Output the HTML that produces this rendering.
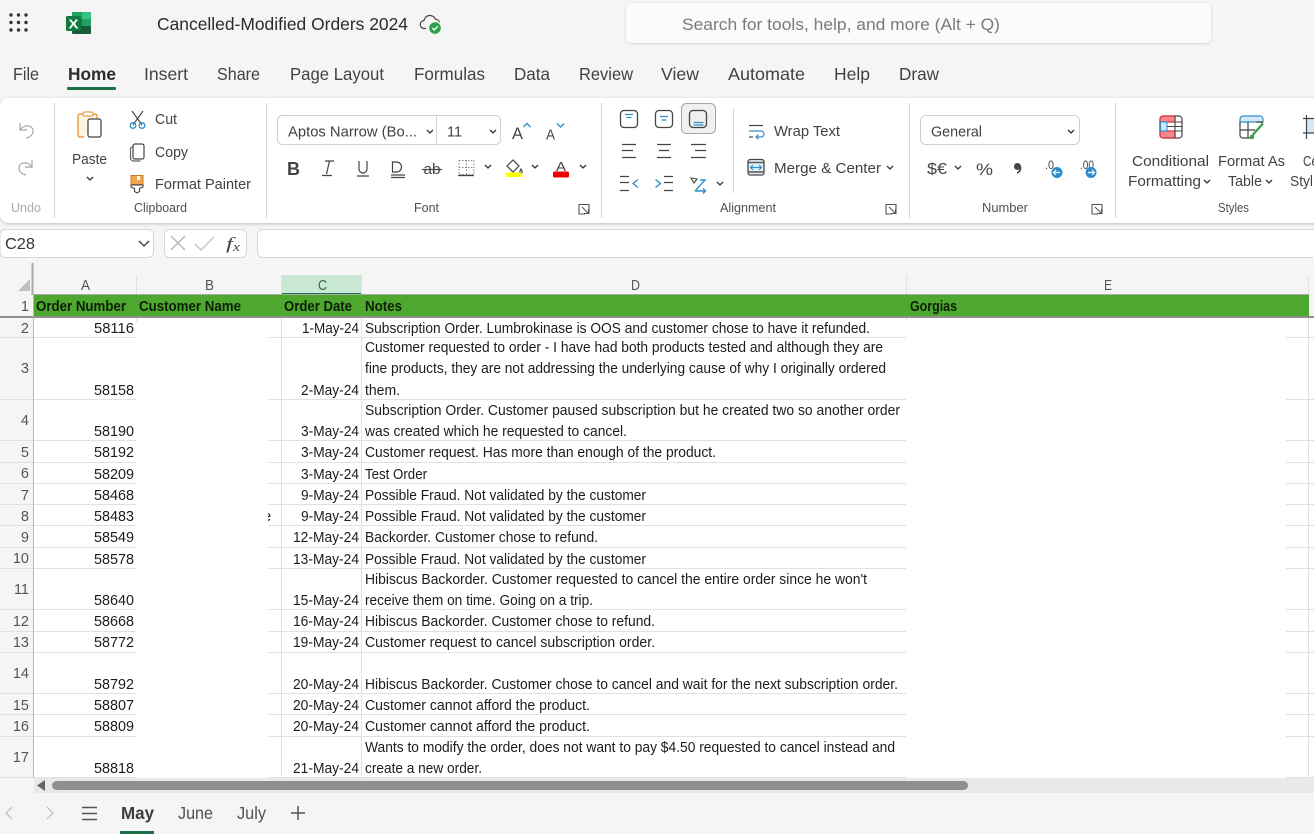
<!DOCTYPE html>
<html lang="en">
<head>
<meta charset="utf-8">
<title>Cancelled-Modified Orders 2024</title>
<style>
html,body{margin:0;padding:0;width:1314px;height:834px;overflow:hidden;background:#f5f5f5}
svg{display:block}
text{font-family:"Liberation Sans",sans-serif}
.c text{font-size:14.5px;fill:#1c1c1c}
.m text{font-size:17.5px;fill:#424242}
.u text{font-size:14.5px;fill:#424242}
.h text{font-size:14.5px;fill:#555}
.rn text{font-size:14.5px;fill:#555;text-anchor:end}
.bl{fill:none;stroke:#2f8fc9;stroke-width:1.4}
.ch{fill:none;stroke:#333;stroke-width:1.3}
.gl{stroke:#e1e1e1;stroke-width:1}
</style>
</head>
<body>
<svg xmlns="http://www.w3.org/2000/svg" width="1314" height="834" viewBox="0 0 1314 834">
<defs>
<filter id="sh" x="-2%" y="-10%" width="104%" height="125%"><feDropShadow dx="0" dy="1" stdDeviation="1.5" flood-color="#000" flood-opacity=".22"/></filter>
<filter id="sh2" x="-2%" y="-20%" width="104%" height="150%"><feDropShadow dx="0" dy="0.5" stdDeviation="1" flood-color="#000" flood-opacity=".18"/></filter>
<clipPath id="clipE"><rect x="268" y="508" width="3" height="16"/></clipPath>
</defs>
<rect width="1314" height="834" fill="#f5f5f5"/>

<!-- App launcher -->
<g fill="#333">
<circle cx="11" cy="15" r="1.7"/><circle cx="18.5" cy="15" r="1.7"/><circle cx="26" cy="15" r="1.7"/>
<circle cx="11" cy="22.5" r="1.7"/><circle cx="18.5" cy="22.5" r="1.7"/><circle cx="26" cy="22.5" r="1.7"/>
<circle cx="11" cy="30" r="1.7"/><circle cx="18.5" cy="30" r="1.7"/><circle cx="26" cy="30" r="1.7"/>
</g>
<!-- Excel logo -->
<rect x="72" y="12" width="19" height="7" fill="#21a366"/>
<rect x="72" y="19" width="19" height="7" fill="#107c41"/>
<rect x="72" y="26" width="19" height="8" rx="1" fill="#185c37"/>
<rect x="82" y="12" width="9" height="7" fill="#33c481"/>
<rect x="82" y="19" width="9" height="7" fill="#21a366"/>
<rect x="66" y="16" width="15" height="15" rx="1.5" fill="#0f7b3f"/>
<text x="68.500" y="28.500" font-size="13" font-weight="bold" fill="#fff" textLength="10" lengthAdjust="spacingAndGlyphs">X</text>

<text x="157" y="30" font-size="17.5" fill="#2b2b2b" textLength="251" lengthAdjust="spacingAndGlyphs">Cancelled-Modified Orders 2024</text>
<!-- cloud -->
<path d="M426 28.5h-1.5a4 4 0 0 1-.5-8 6 6 0 0 1 11.5-1.2 4 4 0 0 1 4 3" fill="none" stroke="#444" stroke-width="1.2"/>
<circle cx="435" cy="28" r="5.8" fill="#2e9e4f"/>
<path d="M432.3 28l2 2 3.4-3.8" fill="none" stroke="#fff" stroke-width="1.3"/>

<!-- Search -->
<rect x="626" y="3" width="585" height="40" rx="5" fill="#fbfbfb" filter="url(#sh2)"/>
<text x="682" y="30" font-size="17" fill="#7a7a7a" textLength="318" lengthAdjust="spacingAndGlyphs">Search for tools, help, and more (Alt + Q)</text>

<!-- Menu tabs -->
<g class="m">
<text x="13" y="80" textLength="26" lengthAdjust="spacingAndGlyphs">File</text>
<text x="68" y="80" textLength="48" lengthAdjust="spacingAndGlyphs" style="font-weight:bold;fill:#2b2b2b">Home</text>
<text x="144" y="80" textLength="44" lengthAdjust="spacingAndGlyphs">Insert</text>
<text x="217" y="80" textLength="43" lengthAdjust="spacingAndGlyphs">Share</text>
<text x="290" y="80" textLength="94" lengthAdjust="spacingAndGlyphs">Page Layout</text>
<text x="414" y="80" textLength="71" lengthAdjust="spacingAndGlyphs">Formulas</text>
<text x="514" y="80" textLength="36" lengthAdjust="spacingAndGlyphs">Data</text>
<text x="579" y="80" textLength="54" lengthAdjust="spacingAndGlyphs">Review</text>
<text x="661" y="80" textLength="38" lengthAdjust="spacingAndGlyphs">View</text>
<text x="728" y="80" textLength="77" lengthAdjust="spacingAndGlyphs">Automate</text>
<text x="834" y="80" textLength="36" lengthAdjust="spacingAndGlyphs">Help</text>
<text x="899" y="80" textLength="40" lengthAdjust="spacingAndGlyphs">Draw</text>
</g>
<rect x="67" y="87" width="49" height="3" rx="1" fill="#1e6f46"/>

<!-- Ribbon -->
<rect x="0" y="98" width="1340" height="125" rx="9" fill="#fff" filter="url(#sh)"/>
<g stroke="#d4d4d4" stroke-width="1">
<path d="M54.5 103v115M266.5 103v115M601.5 103v115M733.5 108v85M909.5 103v115M1115.5 103v115"/>
</g>

<!-- Undo / redo -->
<g fill="none" stroke="#a8a8a8" stroke-width="1.2">
<path d="M20 123v7h7M20.500 129.500C24 124 33 125 33 131c0 3-2 6-7 7"/>
<path d="M32 160v7h-7M31.500 166.500C28 161 19 162 19 168c0 3 2 6 7 7"/>
</g>
<text x="11" y="212" font-size="12.5" fill="#ababab" textLength="30" lengthAdjust="spacingAndGlyphs">Undo</text>

<!-- Paste -->
<path d="M84 137h-4a2 2 0 0 1-2-2v-19a2 2 0 0 1 2-2h15a2 2 0 0 1 2 2v3" fill="#fdf3e3" stroke="#e8a04c" stroke-width="1.5"/>
<rect x="83" y="112" width="10" height="4" rx="1.5" fill="#fff" stroke="#e8a04c" stroke-width="1.3"/>
<rect x="88" y="119" width="13" height="18" rx="2" fill="#fff" stroke="#444" stroke-width="1.3"/>
<text x="72" y="164" font-size="14.5" fill="#424242" textLength="35" lengthAdjust="spacingAndGlyphs">Paste</text>
<path class="ch" d="M87 177l3 3 3-3"/>

<!-- Cut copy painter -->
<g fill="none" stroke="#444" stroke-width="1.1"><path d="M132 111l10 14M143 111l-10 14"/></g>
<g fill="none" stroke="#2f8fc9" stroke-width="1.3"><circle cx="133" cy="125.500" r="2.800"/><circle cx="142" cy="125.500" r="2.800"/></g>
<rect x="133" y="144" width="11" height="15" rx="2" fill="#fff" stroke="#444" stroke-width="1.2"/>
<path d="M133 147h-.5a2 2 0 0 0-2 2v9a3 3 0 0 0 3 3h7" fill="none" stroke="#666" stroke-width="1.2"/>
<path d="M131 175.500h12v9h-12z" fill="#f2a54a" stroke="#c77a28" stroke-width="1"/>
<rect x="137" y="176" width="3" height="4" fill="#fff"/>
<path d="M131 185h12v2l-3.500 1.500v3l-2.500 1.500-2.500-1.500v-3l-3.500-1.500z" fill="#fff" stroke="#444" stroke-width="1.100"/>
<g class="u">
<text x="155" y="124" textLength="22" lengthAdjust="spacingAndGlyphs">Cut</text>
<text x="155" y="157" textLength="33" lengthAdjust="spacingAndGlyphs">Copy</text>
<text x="155" y="189" textLength="96" lengthAdjust="spacingAndGlyphs">Format Painter</text>
</g>

<!-- Font combos -->
<rect x="277.500" y="115.500" width="223" height="29" rx="5" fill="#fff" stroke="#cfcfcf"/>
<path d="M436.500 116v28" stroke="#d4d4d4"/>
<text x="288" y="136.500" font-size="14.500" fill="#424242" textLength="129" lengthAdjust="spacingAndGlyphs">Aptos Narrow (Bo...</text>
<path class="ch" d="M427 130l3 3 3-3"/>
<text x="447" y="136.500" font-size="14.500" fill="#424242" textLength="15" lengthAdjust="spacingAndGlyphs">11</text>
<path class="ch" d="M490 130l3 3 3-3"/>
<text x="512" y="139" font-size="17" fill="#444" textLength="11" lengthAdjust="spacingAndGlyphs">A</text>
<path d="M523.500 127l3.500-3.500 3.500 3.500" class="bl"/>
<text x="546" y="139.500" font-size="14.500" fill="#444" textLength="9" lengthAdjust="spacingAndGlyphs">A</text>
<path d="M557 123.500l3.500 3.500 3.500-3.500" class="bl"/>

<!-- Font buttons -->
<text x="287" y="175" font-size="18" font-weight="bold" fill="#444" textLength="13" lengthAdjust="spacingAndGlyphs">B</text>
<path d="M325 161h9M329.500 161l-3 13M322 175.500h10" fill="none" stroke="#444" stroke-width="1.200"/>
<path d="M359 161v8a4 4 0 0 0 8 0v-8M357 176h12" fill="none" stroke="#444" stroke-width="1.200"/>
<path d="M392.500 162v10h4a5 5 0 0 0 0-10zM391 175h14M391 177.500h14" fill="none" stroke="#444" stroke-width="1.200"/>
<text x="423.500" y="174" font-size="15" fill="#444" textLength="17" lengthAdjust="spacingAndGlyphs">ab</text>
<path d="M422 169.500h20" stroke="#444" stroke-width="1.200"/>
<path d="M459 160.500h15v14h-15zM466.500 160.500v14M459 167.500h15" fill="none" stroke="#888" stroke-width="1" stroke-dasharray="1.500 1.500"/>
<path d="M458 175.500h16" stroke="#444" stroke-width="1.300"/>
<path class="ch" d="M485 165l3 3 3-3"/>
<path d="M507 166l6-6 6 6-6 6zM521 169c1.500 2 1.500 4 0 4s-1.500-2 0-4z" fill="none" stroke="#444" stroke-width="1.200"/>
<rect x="506" y="172.500" width="16" height="4.500" rx="1.500" fill="#ffff00"/>
<path class="ch" d="M532 165l3 3 3-3"/>
<text x="556" y="171" font-size="13" fill="#444" textLength="10" lengthAdjust="spacingAndGlyphs">A</text>
<rect x="553" y="171.500" width="16" height="6" rx="1.500" fill="#ee0000"/>
<path class="ch" d="M580 165l3 3 3-3"/>

<text x="414" y="212" font-size="12.500" fill="#505050" textLength="25" lengthAdjust="spacingAndGlyphs">Font</text>
<text x="134" y="212" font-size="12.500" fill="#505050" textLength="53" lengthAdjust="spacingAndGlyphs">Clipboard</text>

<!-- Expand icons -->
<g fill="none" stroke="#555" stroke-width="1.100">
<path d="M589 214v-9.500h-10v9.500h6M582 207l6.500 6.500M588.500 209v4.500h-4.500"/>
<path d="M896 214v-9.500h-10v9.500h6M889 207l6.500 6.500M895.500 209v4.500h-4.500"/>
<path d="M1102 214v-9.500h-10v9.500h6M1095 207l6.500 6.500M1101.500 209v4.500h-4.500"/>
</g>

<!-- Alignment -->
<rect x="681.500" y="103.500" width="34" height="30" rx="5" fill="#f0f0f0" stroke="#a5a5a5"/>
<g fill="#fff" stroke="#444" stroke-width="1.300">
<rect x="620.500" y="110.500" width="17" height="17" rx="3.500"/>
<rect x="655.500" y="110.500" width="17" height="17" rx="3.500"/>
<rect x="689.500" y="110.500" width="17" height="17" rx="3.500" fill="#f0f0f0"/>
</g>
<g class="bl" style="stroke-width:1.200">
<path d="M625 114.500h8M626.500 117.500h5M660 116.500h8M661.500 120h5M693.500 122.500h10M693.500 125h10"/>
</g>
<g stroke="#444" stroke-width="1.200" fill="none">
<path d="M622 144.500h14M622 150.500h11M622 157.500h14"/>
<path d="M657 144.500h14M659 150.500h10M657 157.500h14"/>
<path d="M691 144.500h15M695 150.500h11M691 157.500h15"/>
<path d="M620 176.500h9M620 182.500h9M620 190.500h9"/>
<path d="M664 176.500h9M664 182.500h9M664 190.500h9"/>
</g>
<path class="bl" d="M638 179.500l-5 4 5 4M655.500 179.500l5 4-5 4"/>
<path d="M691 178l6 1-3 4z" fill="none" stroke="#444" stroke-width="1.100"/>
<path class="bl" d="M695 191l10-11h-5M695 191h10M703 188.500l2.500 2.500-2.500 2.500"/>
<path class="ch" d="M717 182l3 3 3-3"/>

<path d="M749 125.500h14" stroke="#444" stroke-width="1.200"/>
<path d="M749 131h12a3 3 0 0 1 0 6h-5M758.500 134.500l-2.500 2.500 2.500 2.500" fill="none" stroke="#2f8fc9" stroke-width="1.200"/>
<path d="M749 137h4" stroke="#444" stroke-width="1.200"/>
<text x="774" y="136" font-size="14.500" fill="#424242" textLength="66" lengthAdjust="spacingAndGlyphs">Wrap Text</text>
<rect x="748" y="159.500" width="16" height="15.500" rx="2.500" fill="#e6f1f9" stroke="#444" stroke-width="1.300"/>
<path d="M748 162.500h16M748 172h16" stroke="#555" stroke-width="1.400"/>
<path d="M751 167.500h10M753 165l-2.500 2.500 2.500 2.500M759 165l2.500 2.500-2.500 2.500" fill="none" stroke="#2f8fc9" stroke-width="1.200"/>
<text x="774" y="173" font-size="14.500" fill="#424242" textLength="107" lengthAdjust="spacingAndGlyphs">Merge &amp; Center</text>
<path class="ch" d="M887 166l3 3 3-3"/>
<text x="720" y="212" font-size="12.500" fill="#505050" textLength="56" lengthAdjust="spacingAndGlyphs">Alignment</text>

<!-- Number -->
<rect x="920.500" y="115.500" width="159" height="29" rx="5" fill="#fff" stroke="#cfcfcf"/>
<text x="931" y="136.500" font-size="14.500" fill="#424242" textLength="51" lengthAdjust="spacingAndGlyphs">General</text>
<path class="ch" d="M1068 130l3 3 3-3"/>
<text x="927" y="174" font-size="15.500" fill="#444" textLength="20" lengthAdjust="spacingAndGlyphs">$€</text>
<path class="ch" d="M955 166l3 3 3-3"/>
<text x="976" y="175" font-size="17" fill="#444" textLength="17" lengthAdjust="spacingAndGlyphs">%</text>
<circle cx="1017.500" cy="166.500" r="3.500" fill="#444"/>
<path d="M1020.500 167c.5 3-1 5-3.500 6" fill="none" stroke="#444" stroke-width="1.600"/>
<text x="1045" y="169" font-size="12" fill="#444" textLength="9" lengthAdjust="spacingAndGlyphs">.0</text>
<circle cx="1057" cy="172.500" r="5.500" fill="#2b8ccb"/>
<path d="M1060 172.500h-6M1056 170l-2.500 2.500 2.500 2.500" fill="none" stroke="#fff" stroke-width="1.200"/>
<text x="1080" y="169" font-size="12" fill="#444" textLength="14" lengthAdjust="spacingAndGlyphs">.00</text>
<circle cx="1091" cy="172.500" r="5.500" fill="#2b8ccb"/>
<path d="M1088 172.500h6M1092 170l2.500 2.500-2.500 2.500" fill="none" stroke="#fff" stroke-width="1.200"/>
<text x="982" y="212" font-size="12.500" fill="#505050" textLength="46" lengthAdjust="spacingAndGlyphs">Number</text>

<!-- Styles -->
<rect x="1160" y="116" width="22" height="22" rx="3" fill="#fff" stroke="#444" stroke-width="1.200"/>
<path d="M1163 116h12v6h-15v-3a3 3 0 0 1 3-3zM1160 131h15v7h-12a3 3 0 0 1-3-3z" fill="#f9868a" stroke="#d9343b" stroke-width="1.200"/>
<rect x="1160.500" y="122" width="6.500" height="9" fill="#cfe5f6" stroke="#2f8fc9" stroke-width="1"/>
<path d="M1175 116v22M1175 122h7M1167 126.500h15M1175 131h7" stroke="#444" stroke-width="1.100" fill="none"/>
<path d="M1240 125v-6a3 3 0 0 1 3-3h17a3 3 0 0 1 3 3v3h-23" fill="#d6e8f6" stroke="#2f8fc9" stroke-width="1.200"/>
<path d="M1240 122v13a3 3 0 0 0 3 3h7M1240 130h15M1248 122v16M1256 122h6v2" fill="none" stroke="#444" stroke-width="1.200"/>
<path d="M1252 137l1.500-3 9.500-10.500" fill="none" stroke="#3ea04f" stroke-width="2.400"/>
<circle cx="1252" cy="137" r="2.300" fill="#3ea04f"/>
<rect x="1307" y="118" width="7" height="15" fill="#d6e8f6"/>
<path d="M1306.500 115v24M1303 118.500h11M1303 133h11" stroke="#444" stroke-width="1.200" fill="none"/>
<g class="u">
<text x="1132" y="166" textLength="77" lengthAdjust="spacingAndGlyphs">Conditional</text>
<text x="1128" y="186" textLength="73" lengthAdjust="spacingAndGlyphs">Formatting</text>
<text x="1218" y="166" textLength="67" lengthAdjust="spacingAndGlyphs">Format As</text>
<text x="1228" y="186" textLength="34" lengthAdjust="spacingAndGlyphs">Table</text>
<text x="1303" y="166" textLength="15" lengthAdjust="spacingAndGlyphs">Ce</text>
<text x="1290" y="186" textLength="23" lengthAdjust="spacingAndGlyphs">Styl</text>
</g>
<path class="ch" d="M1204 180l3 3 3-3M1266 180l3 3 3-3"/>
<text x="1218" y="212" font-size="12.500" fill="#505050" textLength="31" lengthAdjust="spacingAndGlyphs">Styles</text>

<!-- Formula bar -->
<rect x="0" y="229.500" width="153.500" height="28" rx="5" fill="#fff" stroke="#d6d6d6"/>
<text x="5" y="249" font-size="15.500" fill="#333" textLength="30" lengthAdjust="spacingAndGlyphs">C28</text>
<path d="M139 241l5 5 5-5" fill="none" stroke="#333" stroke-width="1.300"/>
<rect x="164.500" y="229.500" width="82" height="28" rx="5" fill="#fff" stroke="#d6d6d6"/>
<path d="M171 236l14 14M185 236l-14 14" stroke="#b3b3b3" stroke-width="1.400"/>
<path d="M195 244l6 6 13-13" fill="none" stroke="#c4c4c4" stroke-width="1.400"/>
<text x="226" y="249" font-size="17" fill="#444" textLength="7" lengthAdjust="spacingAndGlyphs" style="font-family:'Liberation Serif',serif;font-style:italic">f</text>
<text x="233" y="251" font-size="13" fill="#444" textLength="7" lengthAdjust="spacingAndGlyphs" style="font-family:'Liberation Serif',serif;font-style:italic">x</text>
<rect x="257.500" y="229.500" width="1070" height="28" rx="5" fill="#fff" stroke="#d6d6d6"/>

<!-- Sheet white -->
<rect x="34" y="316" width="1280" height="462" fill="#fff"/>
<rect x="281" y="275" width="80" height="19" fill="#c9e7d5"/>
<rect x="281" y="293" width="81" height="2" fill="#1e7145"/>

<!-- Horizontal gridlines -->
<g class="gl">
<path d="M0 337.500H136M268 337.500H906M1286 337.500H1314"/>
<path d="M0 399.500H136M268 399.500H906M1286 399.500H1314"/>
<path d="M0 440.500H136M268 440.500H906M1286 440.500H1314"/>
<path d="M0 462.500H136M268 462.500H906M1286 462.500H1314"/>
<path d="M0 483.500H136M268 483.500H906M1286 483.500H1314"/>
<path d="M0 504.500H136M268 504.500H906M1286 504.500H1314"/>
<path d="M0 525.500H136M268 525.500H906M1286 525.500H1314"/>
<path d="M0 547.500H136M268 547.500H906M1286 547.500H1314"/>
<path d="M0 568.500H136M268 568.500H906M1286 568.500H1314"/>
<path d="M0 609.500H136M268 609.500H906M1286 609.500H1314"/>
<path d="M0 631.500H136M268 631.500H906M1286 631.500H1314"/>
<path d="M0 652.500H136M268 652.500H906M1286 652.500H1314"/>
<path d="M0 693.500H136M268 693.500H906M1286 693.500H1314"/>
<path d="M0 714.500H136M268 714.500H906M1286 714.500H1314"/>
<path d="M0 736.500H136M268 736.500H906M1286 736.500H1314"/>
<path d="M0 777.500H136M268 777.500H906M1286 777.500H1314"/>
<path d="M281.500 316V778M361.500 316V778M1308.500 316V778"/>
<path d="M136.500 275V295M281.500 275V295M361.500 275V295M906.500 275V295M1308.500 275V295M136.500 316V322M906.500 316V320"/>
</g>

<!-- Green header row -->
<rect x="34" y="295" width="1275" height="21" fill="#4ea72e"/>
<rect x="33" y="294" width="1276" height="1" fill="#a9a9a9"/>
<rect x="0" y="316" width="1314" height="2" fill="#8e8e8e"/>
<path d="M32.500 263V295" stroke="#a8a8a8" stroke-width="2"/>
<path d="M33.500 295V778" stroke="#b8b8b8" stroke-width="1"/>
<path d="M30 279v12H18z" fill="#c0c0c0"/>

<!-- Column headings -->
<g class="h">
<text x="81" y="290" textLength="9" lengthAdjust="spacingAndGlyphs">A</text>
<text x="205" y="290" textLength="9" lengthAdjust="spacingAndGlyphs">B</text>
<text x="318" y="290" textLength="9" lengthAdjust="spacingAndGlyphs" style="fill:#2f6b4a">C</text>
<text x="631" y="290" textLength="9" lengthAdjust="spacingAndGlyphs">D</text>
<text x="1104" y="290" textLength="8" lengthAdjust="spacingAndGlyphs">E</text>
</g>

<!-- Row numbers -->
<g class="rn">
<text x="29" y="311">1</text><text x="29" y="333">2</text><text x="29" y="373">3</text>
<text x="29" y="425">4</text><text x="29" y="457">5</text><text x="29" y="478">6</text>
<text x="29" y="500">7</text><text x="29" y="521">8</text><text x="29" y="542">9</text>
<text x="29" y="563">10</text><text x="29" y="594">11</text><text x="29" y="626">12</text>
<text x="29" y="647">13</text><text x="29" y="678">14</text><text x="29" y="710">15</text>
<text x="29" y="731">16</text><text x="29" y="762">17</text>
</g>

<!-- Header labels -->
<g font-size="14.500" font-weight="bold" fill="#0d1f07">
<text x="36" y="311" textLength="90" lengthAdjust="spacingAndGlyphs">Order Number</text>
<text x="139" y="311" textLength="102" lengthAdjust="spacingAndGlyphs">Customer Name</text>
<text x="284" y="311" textLength="68" lengthAdjust="spacingAndGlyphs">Order Date</text>
<text x="365" y="311" textLength="37" lengthAdjust="spacingAndGlyphs">Notes</text>
<text x="910" y="311" textLength="47" lengthAdjust="spacingAndGlyphs">Gorgias</text>
</g>

<!-- Order numbers -->
<g class="c">
<text x="94" y="333" textLength="40" lengthAdjust="spacingAndGlyphs">58116</text>
<text x="94" y="395" textLength="40" lengthAdjust="spacingAndGlyphs">58158</text>
<text x="94" y="436" textLength="40" lengthAdjust="spacingAndGlyphs">58190</text>
<text x="94" y="457" textLength="40" lengthAdjust="spacingAndGlyphs">58192</text>
<text x="94" y="479" textLength="40" lengthAdjust="spacingAndGlyphs">58209</text>
<text x="94" y="500" textLength="40" lengthAdjust="spacingAndGlyphs">58468</text>
<text x="94" y="521" textLength="40" lengthAdjust="spacingAndGlyphs">58483</text>
<text x="94" y="542" textLength="40" lengthAdjust="spacingAndGlyphs">58549</text>
<text x="94" y="564" textLength="40" lengthAdjust="spacingAndGlyphs">58578</text>
<text x="94" y="605" textLength="40" lengthAdjust="spacingAndGlyphs">58640</text>
<text x="94" y="626" textLength="40" lengthAdjust="spacingAndGlyphs">58668</text>
<text x="94" y="647" textLength="40" lengthAdjust="spacingAndGlyphs">58772</text>
<text x="94" y="689" textLength="40" lengthAdjust="spacingAndGlyphs">58792</text>
<text x="94" y="710" textLength="40" lengthAdjust="spacingAndGlyphs">58807</text>
<text x="94" y="731" textLength="40" lengthAdjust="spacingAndGlyphs">58809</text>
<text x="94" y="773" textLength="40" lengthAdjust="spacingAndGlyphs">58818</text>

<!-- clipped fragment -->
<text x="263" y="521" clip-path="url(#clipE)">e</text>

<!-- Dates -->
<text x="302" y="333" textLength="57" lengthAdjust="spacingAndGlyphs">1-May-24</text>
<text x="301" y="395" textLength="58" lengthAdjust="spacingAndGlyphs">2-May-24</text>
<text x="301" y="436" textLength="58" lengthAdjust="spacingAndGlyphs">3-May-24</text>
<text x="301" y="457" textLength="58" lengthAdjust="spacingAndGlyphs">3-May-24</text>
<text x="301" y="479" textLength="58" lengthAdjust="spacingAndGlyphs">3-May-24</text>
<text x="301" y="500" textLength="58" lengthAdjust="spacingAndGlyphs">9-May-24</text>
<text x="301" y="521" textLength="58" lengthAdjust="spacingAndGlyphs">9-May-24</text>
<text x="293" y="542" textLength="66" lengthAdjust="spacingAndGlyphs">12-May-24</text>
<text x="293" y="564" textLength="66" lengthAdjust="spacingAndGlyphs">13-May-24</text>
<text x="293" y="605" textLength="66" lengthAdjust="spacingAndGlyphs">15-May-24</text>
<text x="293" y="626" textLength="66" lengthAdjust="spacingAndGlyphs">16-May-24</text>
<text x="293" y="647" textLength="66" lengthAdjust="spacingAndGlyphs">19-May-24</text>
<text x="293" y="689" textLength="66" lengthAdjust="spacingAndGlyphs">20-May-24</text>
<text x="293" y="710" textLength="66" lengthAdjust="spacingAndGlyphs">20-May-24</text>
<text x="293" y="731" textLength="66" lengthAdjust="spacingAndGlyphs">20-May-24</text>
<text x="293" y="773" textLength="66" lengthAdjust="spacingAndGlyphs">21-May-24</text>

<!-- Notes -->
<text x="365" y="333" textLength="505" lengthAdjust="spacingAndGlyphs">Subscription Order. Lumbrokinase is OOS and customer chose to have it refunded.</text>
<text x="365" y="352" textLength="518" lengthAdjust="spacingAndGlyphs">Customer requested to order - I have had both products tested and although they are</text>
<text x="365" y="373" textLength="521" lengthAdjust="spacingAndGlyphs">fine products, they are not addressing the underlying cause of why I originally ordered</text>
<text x="365" y="395" textLength="35" lengthAdjust="spacingAndGlyphs">them.</text>
<text x="365" y="415" textLength="535" lengthAdjust="spacingAndGlyphs">Subscription Order. Customer paused subscription but he created two so another order</text>
<text x="365" y="436" textLength="262" lengthAdjust="spacingAndGlyphs">was created which he requested to cancel.</text>
<text x="365" y="457" textLength="351" lengthAdjust="spacingAndGlyphs">Customer request. Has more than enough of the product.</text>
<text x="365" y="479" textLength="62" lengthAdjust="spacingAndGlyphs">Test Order</text>
<text x="365" y="500" textLength="281" lengthAdjust="spacingAndGlyphs">Possible Fraud. Not validated by the customer</text>
<text x="365" y="521" textLength="281" lengthAdjust="spacingAndGlyphs">Possible Fraud. Not validated by the customer</text>
<text x="365" y="542" textLength="233" lengthAdjust="spacingAndGlyphs">Backorder. Customer chose to refund.</text>
<text x="365" y="564" textLength="281" lengthAdjust="spacingAndGlyphs">Possible Fraud. Not validated by the customer</text>
<text x="365" y="584" textLength="502" lengthAdjust="spacingAndGlyphs">Hibiscus Backorder. Customer requested to cancel the entire order since he won't</text>
<text x="365" y="605" textLength="228" lengthAdjust="spacingAndGlyphs">receive them on time. Going on a trip.</text>
<text x="365" y="626" textLength="290" lengthAdjust="spacingAndGlyphs">Hibiscus Backorder. Customer chose to refund.</text>
<text x="365" y="647" textLength="290" lengthAdjust="spacingAndGlyphs">Customer request to cancel subscription order.</text>
<text x="365" y="689" textLength="533" lengthAdjust="spacingAndGlyphs">Hibiscus Backorder. Customer chose to cancel and wait for the next subscription order.</text>
<text x="365" y="710" textLength="225" lengthAdjust="spacingAndGlyphs">Customer cannot afford the product.</text>
<text x="365" y="731" textLength="225" lengthAdjust="spacingAndGlyphs">Customer cannot afford the product.</text>
<text x="365" y="752" textLength="530" lengthAdjust="spacingAndGlyphs">Wants to modify the order, does not want to pay $4.50 requested to cancel instead and</text>
<text x="365" y="773" textLength="117" lengthAdjust="spacingAndGlyphs">create a new order.</text>
</g>

<!-- Scrollbar -->
<rect x="34" y="778" width="1280" height="15" fill="#e9e9e9"/>
<path d="M45 780v11l-8-5.500z" fill="#666"/>
<rect x="52" y="781" width="916" height="9" rx="4.500" fill="#8f8f8f"/>

<!-- Sheet tabs -->
<rect x="0" y="793" width="1314" height="41" fill="#f5f5f5"/>
<path d="M12 807l-6 6 6 6M47 807l6 6-6 6" fill="none" stroke="#c2c2c2" stroke-width="1.300"/>
<path d="M82 807.500h15M82 813.500h15M82 819.500h15" stroke="#555" stroke-width="1.500"/>
<text x="121" y="819" font-size="17.500" font-weight="bold" fill="#3c3c3c" textLength="33" lengthAdjust="spacingAndGlyphs">May</text>
<text x="178" y="819" font-size="17.500" fill="#505050" textLength="35" lengthAdjust="spacingAndGlyphs">June</text>
<text x="237" y="819" font-size="17.500" fill="#505050" textLength="29" lengthAdjust="spacingAndGlyphs">July</text>
<path d="M298 806v14M291 813h14" stroke="#555" stroke-width="1.500"/>
<rect x="120" y="831" width="34" height="3" fill="#1e6f46"/>
</svg>
</body>
</html>
